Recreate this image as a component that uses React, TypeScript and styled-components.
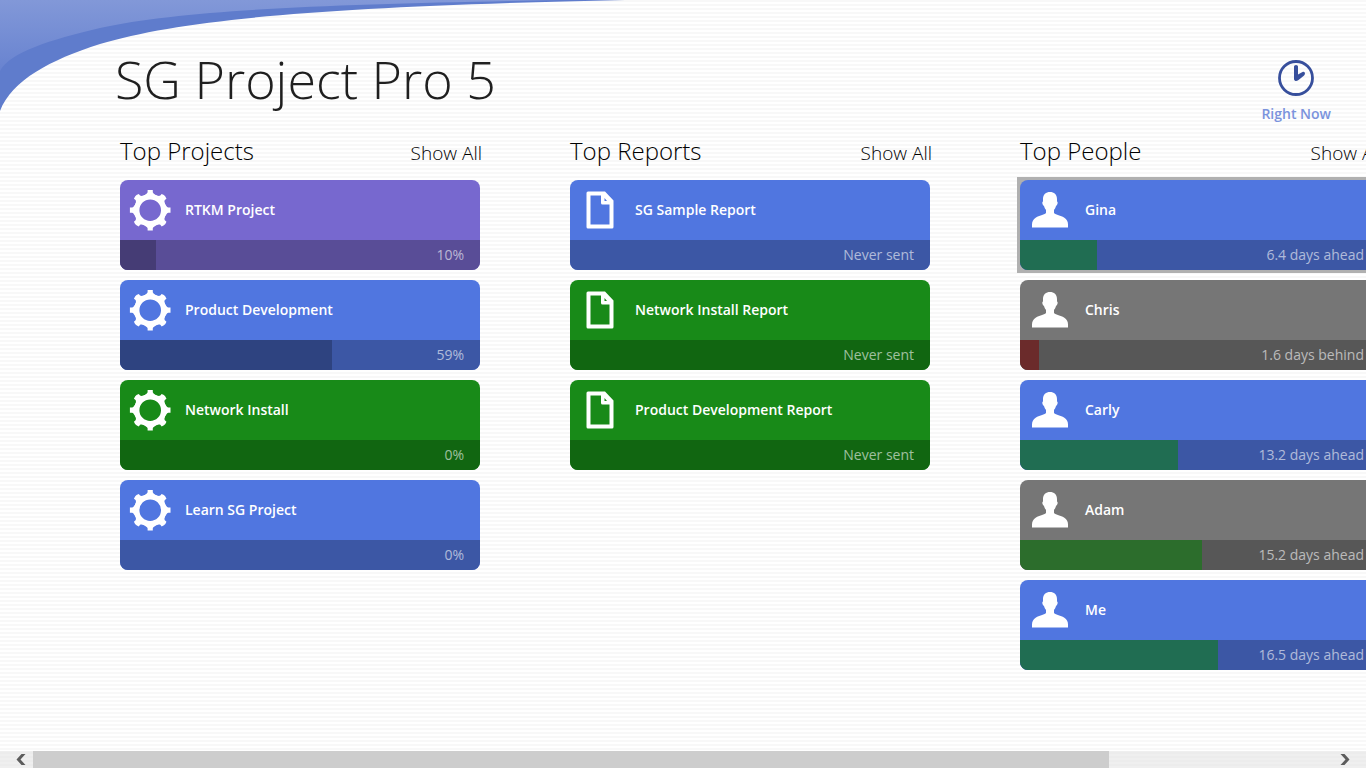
import React from 'react';
import styled, { createGlobalStyle } from 'styled-components';

const GlobalStyle = createGlobalStyle`
  *, *::before, *::after { box-sizing: border-box; }
  html, body { margin: 0; height: 100%; }
  #root { height: 100%; }
  body {
    font-family: 'Open Sans', 'Noto Sans', sans-serif;
    color: #1f1f1f;
    overflow: hidden;
  }
`;

const Page = styled.div`
  position: relative;
  display: flex;
  flex-direction: column;
  min-height: 100vh;
  overflow: hidden;
  background: repeating-linear-gradient(to bottom, #f8f8f8 0, #f8f8f8 2px, #fff 2px, #fff 4px);
`;

const Swoosh = styled.svg`
  position: absolute;
  top: 0;
  left: 0;
`;

const Header = styled.header`
  position: relative;
  display: flex;
  justify-content: space-between;
  padding: 40px 35px 0 115px;
  height: 130px;
`;

const Title = styled.h1`
  margin: 0;
  font-size: 52px;
  line-height: 78px;
  font-weight: 300;
  white-space: nowrap;
`;

const NowButton = styled.button`
  display: flex;
  flex-direction: column;
  align-items: center;
  padding: 19px 0 0;
  border: 0;
  background: none;
  color: #7b93dd;
  font: 600 14px/20px 'Open Sans', sans-serif;
  gap: 7px;
`;

const Board = styled.main`
  position: relative;
  flex: 1;
  display: flex;
  gap: 90px;
  padding-left: 120px;
`;

const Column = styled.section`
  flex: 0 0 360px;
`;

const ColumnHead = styled.div`
  display: flex;
  justify-content: space-between;
  align-items: baseline;
  height: 50px;
  margin-right: -2px;
`;

const ColumnTitle = styled.h2`
  margin: 0;
  font-size: 24px;
  line-height: 42px;
  font-weight: 300;
  color: #000;
`;

const ShowAll = styled.a`
  color: #000;
  font-size: 19px;
  font-weight: 300;
  text-decoration: none;
`;

const List = styled.ul`
  display: flex;
  flex-direction: column;
  gap: 10px;
  margin: 0;
  padding: 0;
  list-style: none;
`;

type Tone = 'purple' | 'blue' | 'green' | 'gray';
const tones: Record<Tone, { top: string; foot: string }> = {
  purple: { top: '#7768cf', foot: '#594d97' },
  blue: { top: '#5076e0', foot: '#3c57a5' },
  green: { top: '#188a18', foot: '#116611' },
  gray: { top: '#767676', foot: '#575757' },
};

const Tile = styled.li<{ $selected?: boolean }>`
  height: 90px;
  color: #fff;
  outline: ${p => (p.$selected ? '3px solid #b0b0b0' : 'none')};
  background: ${p => (p.$selected ? '#b0b0b0' : 'transparent')};
`;

const TileBody = styled.div<{ $tone: Tone }>`
  display: flex;
  flex-direction: column;
  height: 100%;
  border-radius: 8px;
  overflow: hidden;
  background: ${p => tones[p.$tone].top};
`;

const TileTop = styled.div`
  display: flex;
  align-items: center;
  height: 60px;
  gap: 5px;
`;

const TileName = styled.span`
  font-size: 14px;
  line-height: 20px;
  font-weight: 600;
`;

const TileFoot = styled.div<{ $tone: Tone }>`
  display: grid;
  height: 30px;
  background: ${p => tones[p.$tone].foot};
`;

const Bar = styled.div<{ $color: string }>`
  grid-area: 1 / 1;
  background: ${p => p.$color};
`;

const FootText = styled.span`
  grid-area: 1 / 1;
  justify-self: end;
  padding-right: 16px;
  font-size: 14px;
  line-height: 30px;
  color: rgba(255, 255, 255, 0.6);
`;

const ScrollBar = styled.div`
  display: flex;
  align-items: center;
  height: 17px;
  background: rgba(228, 228, 228, 0.6);
`;

const ScrollButton = styled.button<{ $end?: boolean }>`
  display: flex;
  align-items: center;
  justify-content: ${p => (p.$end ? 'flex-start' : 'flex-end')};
  width: 33px;
  height: 17px;
  padding: 0 7px;
  border: 0;
  background: none;
`;

const Track = styled.div`
  flex: 1;
  height: 17px;
`;

const Thumb = styled.div`
  height: 17px;
  background: #cdcdcd;
`;

const Gear = () => (
  <svg width="60" height="60" viewBox="-30.200 -30.200 60 60" aria-hidden="true">
    <circle r="13.500" fill="none" stroke="#fff" strokeWidth="5.400" />
    {[0, 90, 180, 270].map(a => (
      <path key={a} transform={`rotate(${a})`} fill="#fff" d="M-7.500-13.500C-5-16-3-16.500-2.600-18V-20.300H2.600V-18C3-16.500 5-16 7.500-13.500Z" />
    ))}
    {[45, 135, 225, 315].map(a => (
      <path key={a} transform={`rotate(${a})`} fill="#fff" d="M-7.500-13.500C-5-15.500-3.500-16-3.200-17.500L-3.400-19.600L-1-20.400H1L3.400-19.600L3.200-17.500C3.500-16 5-15.500 7.500-13.500Z" />
    ))}
  </svg>
);

const Doc = () => (
  <svg width="60" height="60" viewBox="0 0 60 60" aria-hidden="true">
    <path fill="#fff" fillRule="evenodd" d="M18 11.500H35L43.500 20.500V47Q43.500 48.500 42 48.500H18Q16.500 48.500 16.500 47V13Q16.500 11.500 18 11.500ZM20.500 15.500V44.500H39.500V24.500H32.500Q31 24.500 31 23V15.500ZM34.500 18V21H37Z" />
  </svg>
);

const Person = () => (
  <svg width="60" height="60" viewBox="0 0 60 60" aria-hidden="true">
    <path fill="#fff" d="M30 12C34 12 37 14.500 37 19V21.500C38.300 22 37.500 25 36 26C35.600 28 34.500 29 34 30V33C36 35 41 35.500 44 37.500C47 39.500 48 41.500 48 44.500V47.500H12V44.500C12 41.500 13 39.500 16 37.500C19 35.500 24 35 26 33V30C25.500 29 24.400 28 24 26C22.500 25 21.700 22 23 21.500V19C23 14.500 26 12 30 12Z" />
  </svg>
);

const Clock = () => (
  <svg width="38" height="38" viewBox="0 0 38 38" aria-hidden="true">
    <circle cx="19" cy="19" r="16.500" fill="none" stroke="#374f9c" strokeWidth="2.800" />
    <path d="M17 7.500Q17 6 19 6Q21 6 21 7.500V15.500L26 12.800Q28 12.500 28 14.500Q27.800 16 26.500 17L21.500 21Q19.500 22.500 18 21.800Q17 21.300 17 20Z" fill="#374f9c" />
  </svg>
);

const Chevron = ({ flip }: { flip?: boolean }) => (
  <svg width="10" height="12" viewBox="0 0 10 12" aria-hidden="true">
    <path transform={flip ? 'matrix(-1 0 0 1 10 0)' : undefined} d="M5.500 0H9.500L4.500 5.500L9.500 11H5.500L0.500 5.500Z" fill="#5c5c5c" />
  </svg>
);

interface Item {
  name: string;
  tone: Tone;
  note: string;
  fill?: number;
  color?: string;
  selected?: boolean;
}

const columns: { title: string; icon: () => React.JSX.Element; items: Item[] }[] = [
  {
    title: 'Top Projects',
    icon: Gear,
    items: [
      { name: 'RTKM Project', tone: 'purple', note: '10%', fill: 10, color: '#453c75' },
      { name: 'Product Development', tone: 'blue', note: '59%', fill: 59, color: '#2e4380' },
      { name: 'Network Install', tone: 'green', note: '0%' },
      { name: 'Learn SG Project', tone: 'blue', note: '0%' },
    ],
  },
  {
    title: 'Top Reports',
    icon: Doc,
    items: [
      { name: 'SG Sample Report', tone: 'blue', note: 'Never sent' },
      { name: 'Network Install Report', tone: 'green', note: 'Never sent' },
      { name: 'Product Development Report', tone: 'green', note: 'Never sent' },
    ],
  },
  {
    title: 'Top People',
    icon: Person,
    items: [
      { name: 'Gina', tone: 'blue', note: '6.4 days ahead', fill: 21.4, color: '#206d52', selected: true },
      { name: 'Chris', tone: 'gray', note: '1.6 days behind', fill: 5.3, color: '#6b2b2b' },
      { name: 'Carly', tone: 'blue', note: '13.2 days ahead', fill: 44, color: '#206d52' },
      { name: 'Adam', tone: 'gray', note: '15.2 days ahead', fill: 50.6, color: '#2c6d2c' },
      { name: 'Me', tone: 'blue', note: '16.5 days ahead', fill: 55, color: '#206d52' },
    ],
  },
];

export default function App() {
  return (
    <Page>
      <GlobalStyle />
      <Swoosh width="640" height="112" viewBox="0 0 640 112" aria-hidden="true">
        <defs>
          <linearGradient id="sky" x1="0" y1="0" x2="0" y2="1">
            <stop offset="0" stopColor="#8298d8" />
            <stop offset="1" stopColor="#6883d0" />
          </linearGradient>
        </defs>
        <path d="M0 0H625C350 6 190 17 100 44C50 60 12 80 0 111Z" fill="#5f7ccc" />
        <path d="M0 0H560C350 4 190 8 100 28C50 40 10 52 0 71Z" fill="url(#sky)" />
      </Swoosh>
      <Header>
        <Title>SG Project Pro 5</Title>
        <NowButton>
          <Clock />
          Right Now
        </NowButton>
      </Header>
      <Board>
        {columns.map(({ title, icon: Icon, items }) => (
          <Column key={title}>
            <ColumnHead>
              <ColumnTitle>{title}</ColumnTitle>
              <ShowAll href="#">Show All</ShowAll>
            </ColumnHead>
            <List>
              {items.map(item => (
                <Tile key={item.name} $selected={item.selected}>
                  <TileBody $tone={item.tone}>
                    <TileTop>
                      <Icon />
                      <TileName>{item.name}</TileName>
                    </TileTop>
                    <TileFoot $tone={item.tone}>
                      {item.fill && <Bar $color={item.color!} style={{ width: `${item.fill}%` }} />}
                      <FootText>{item.note}</FootText>
                    </TileFoot>
                  </TileBody>
                </Tile>
              ))}
            </List>
          </Column>
        ))}
      </Board>
      <ScrollBar>
        <ScrollButton aria-label="Scroll left">
          <Chevron />
        </ScrollButton>
        <Track>
          <Thumb style={{ width: '82.8%' }} />
        </Track>
        <ScrollButton $end aria-label="Scroll right">
          <Chevron flip />
        </ScrollButton>
      </ScrollBar>
    </Page>
  );
}
